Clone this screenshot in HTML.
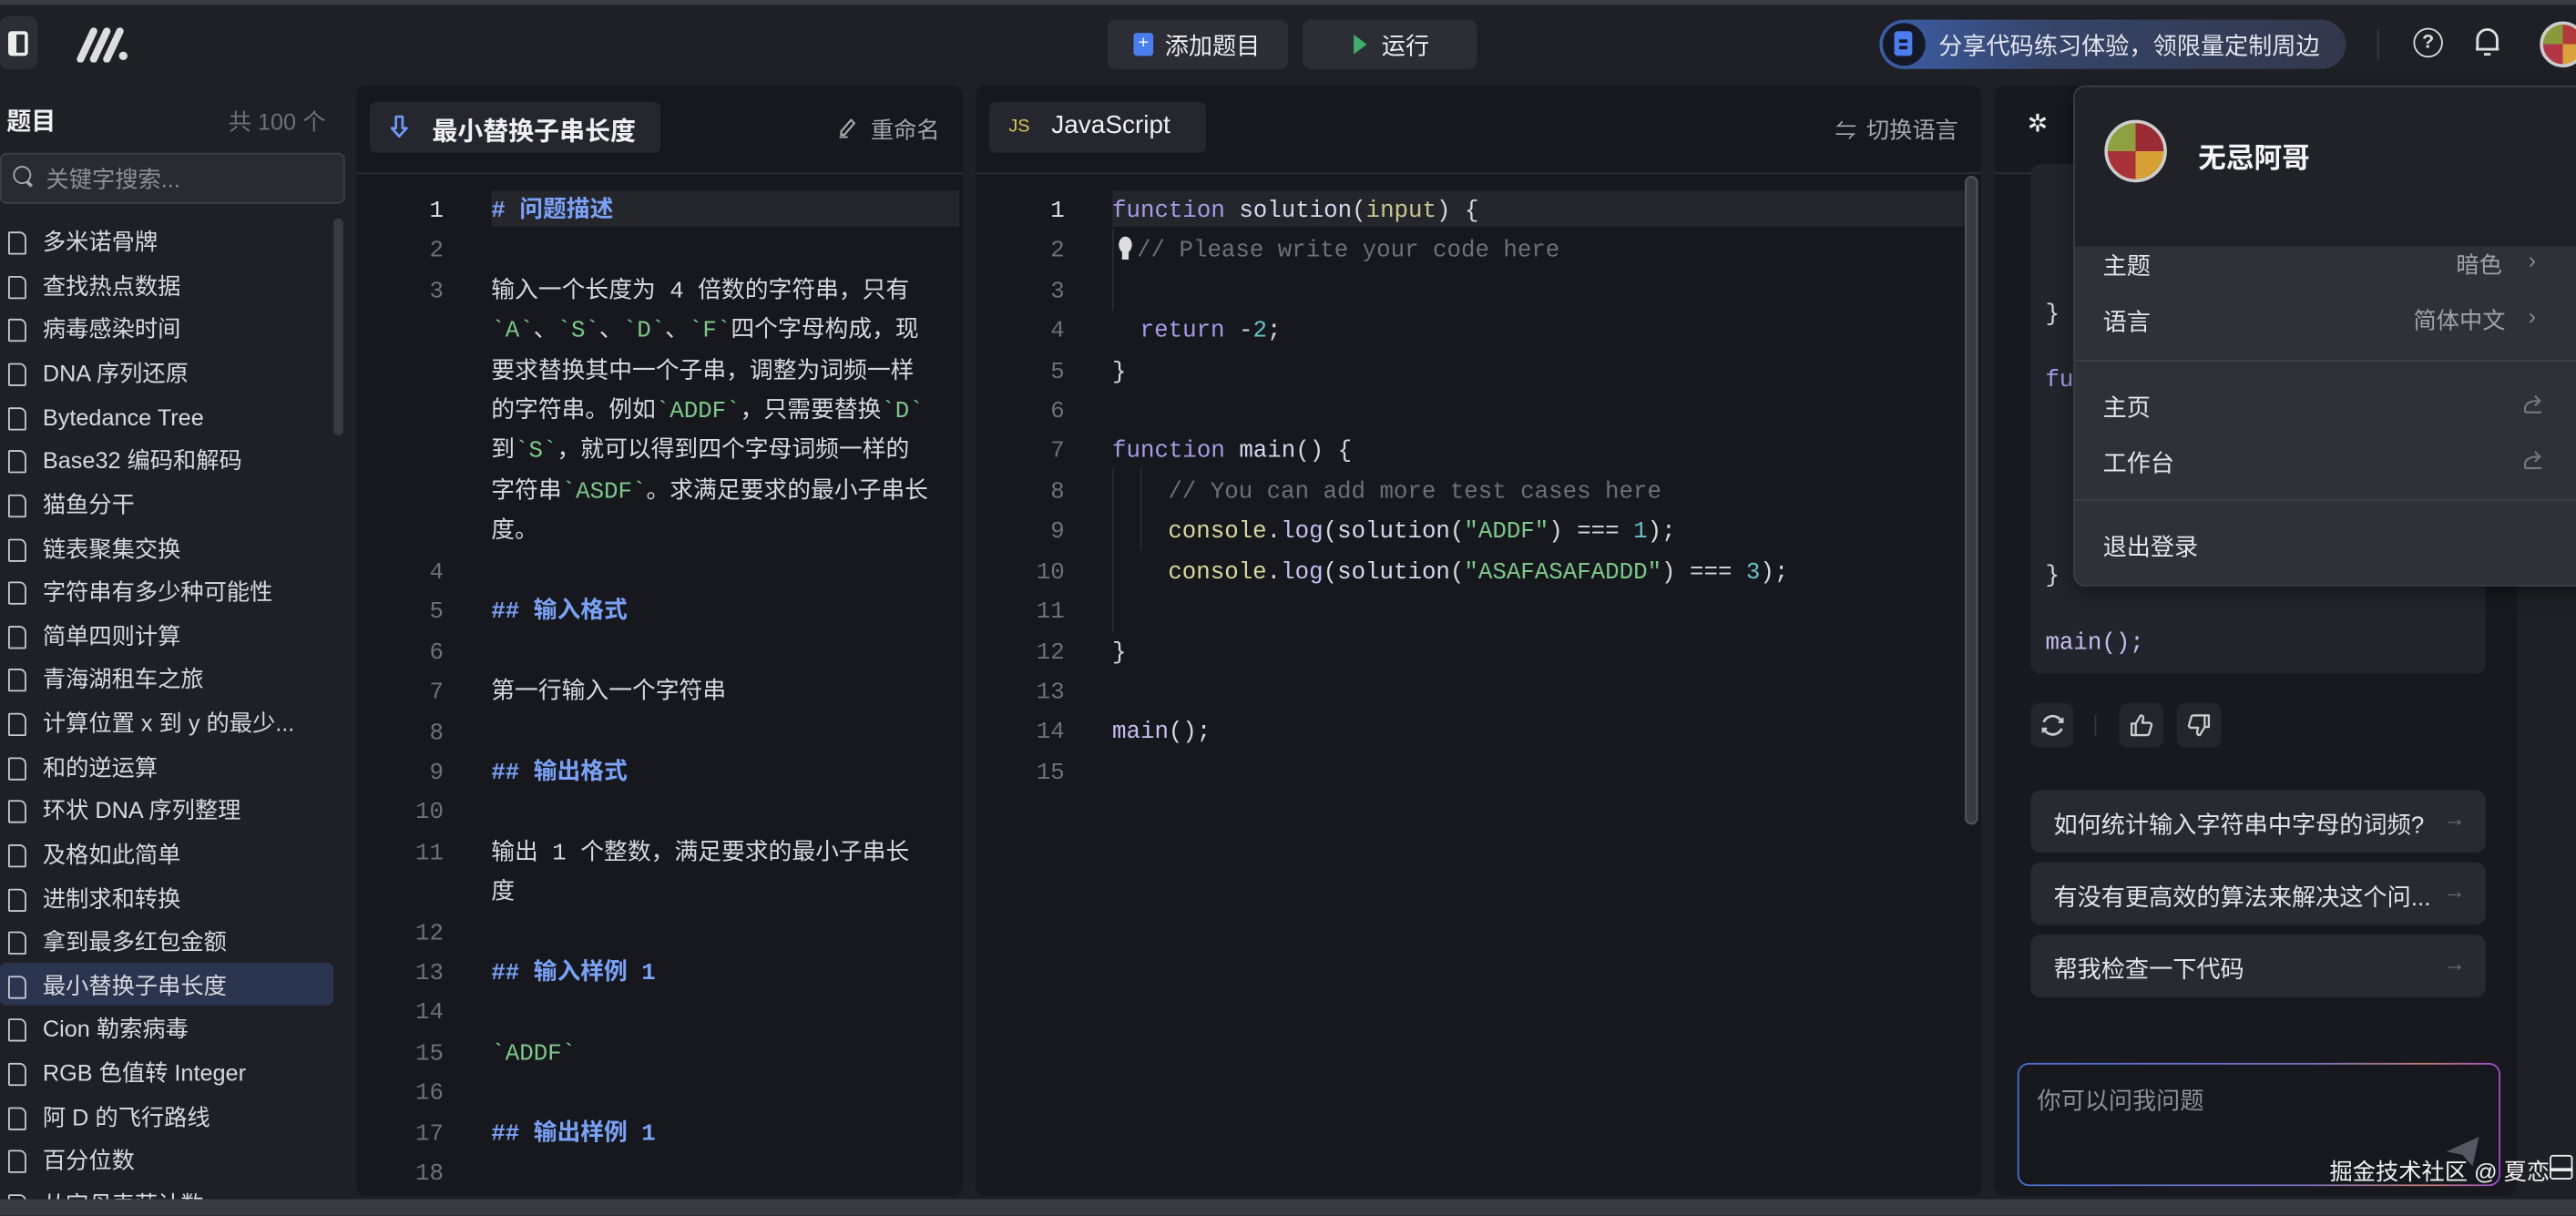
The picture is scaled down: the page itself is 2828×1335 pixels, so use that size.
<!DOCTYPE html>
<html><head><meta charset="utf-8"><style>
*{margin:0;padding:0;box-sizing:border-box}
html,body{width:2828px;height:1334px;overflow:hidden;background:#1f2025}
#w{position:absolute;left:0;top:0;width:1568px;height:740px;transform:scale(1.80357);transform-origin:0 0;background:#1f2025;font-family:"Liberation Sans","Noto Sans CJK SC",sans-serif;color:#d8d9de;font-size:14px;overflow:hidden}
.a{position:absolute;white-space:nowrap}
.m{font-family:"Liberation Mono","Noto Sans CJK SC",monospace;font-size:14.3px}
.ln{position:absolute;height:24px;line-height:24px;white-space:pre}
.num{text-align:right;width:30px;color:#6e707a;font-family:"Liberation Mono",monospace;font-size:14.3px}
.kw{color:#a99be8}.fn{color:#d9d7f0}.pa{color:#c9c88f}.cm{color:#6d707a}.nu{color:#63c5c9}.st{color:#7cc98a}.h{color:#7aa2f7;font-weight:bold}.cn{color:#d7da9a}.lg{color:#c7bdf0}
.item{position:absolute;left:0;width:203px;height:26px;line-height:26px;padding-left:26px;font-size:14px;color:#d8d9de}
.item:before{content:"";position:absolute;left:5px;top:7px;width:9px;height:12px;border:1.6px solid #c9cad0;border-radius:1px 4px 1px 1px}
.btn{position:absolute;background:#2c2d35;border-radius:5px}
</style></head><body><div id="w">
<div class="a" style="left:0;top:0;width:1568px;height:3px;background:#3b3c42"></div>
<!-- top bar -->
<div class="btn" style="left:0;top:10px;width:23px;height:32px;background:#2d2e35"></div>
<div class="a" style="left:5px;top:19px;width:12px;height:15px;border:2px solid #eee;border-left-width:5px;border-radius:2px"></div>
<svg class="a" style="left:46px;top:16px" width="34" height="22" viewBox="0 0 34 22"><path d="M3 20 L11 3 M11 20 L19 3 M19 20 L27 3" stroke="#ddd" stroke-width="4.5" stroke-linecap="round"/><circle cx="29" cy="18" r="2.6" fill="#ddd"/></svg>
<div class="btn" style="left:674px;top:12px;width:110px;height:30px"></div>
<div class="a" style="left:690px;top:20px;width:12px;height:14px;background:#4a7ef0;border-radius:2px;color:#fff;font-size:11px;line-height:13px;text-align:center">+</div>
<div class="a" style="left:709px;top:17px;font-size:14.5px;color:#eee">添加题目</div>
<div class="btn" style="left:793px;top:12px;width:106px;height:30px"></div>
<div class="a" style="left:824px;top:21px;width:0;height:0;border-left:8px solid #3fae6b;border-top:6px solid transparent;border-bottom:6px solid transparent"></div>
<div class="a" style="left:841px;top:17px;font-size:14.5px;color:#eee">运行</div>
<div class="a" style="left:1144px;top:12px;width:284px;height:30px;border-radius:15px;background:linear-gradient(90deg,#3b5ea8 0%,#36456a 35%,#33374a 100%)"></div>
<div class="a" style="left:1146px;top:14px;width:26px;height:26px;border-radius:13px;background:#151825"></div>
<div class="a" style="left:1153px;top:19px;width:11px;height:15px;border-radius:2px;background:#4a7ef0"></div>
<div class="a" style="left:1156px;top:24px;width:5px;height:1.5px;background:#151825"></div>
<div class="a" style="left:1156px;top:28px;width:5px;height:1.5px;background:#151825"></div>
<div class="a" style="left:1180px;top:17px;font-size:14.5px;color:#e4e6ee">分享代码练习体验，领限量定制周边</div>
<div class="a" style="left:1447px;top:18px;width:1px;height:18px;background:#3a3b42"></div>
<div class="a" style="left:1469px;top:17px;width:18px;height:18px;border:1.6px solid #ddd;border-radius:50%;font-size:12px;line-height:15px;text-align:center;color:#ddd;font-weight:bold">?</div>
<svg class="a" style="left:1505px;top:16px" width="18" height="20" viewBox="0 0 18 20"><path d="M3 14 V8 a6 6 0 0 1 12 0 V14 Z M2 14 H16 M7 17 H11" stroke="#ddd" stroke-width="1.6" fill="none" stroke-linejoin="round"/></svg>
<div class="a" style="left:1546px;top:13px;width:28px;height:28px;border-radius:50%;background:conic-gradient(#b23a3a 0 25%,#d9a23a 25% 50%,#b43545 50% 75%,#8a9a3a 75%);border:2px solid #ccc"></div>
<!-- sidebar -->
<div class="a" style="left:4px;top:63px;font-size:15px;font-weight:bold;color:#eee">题目</div>
<div class="a" style="left:139px;top:64px;font-size:14px;color:#6f7179">共 100 个</div>
<div class="a" style="left:0;top:93px;width:210px;height:31px;border:1px solid #3e3f47;border-radius:4px;background:#2a2b32"></div>
<div class="a" style="left:8px;top:101px;width:11px;height:11px;border:1.5px solid #aaa;border-radius:50%"></div>
<div class="a" style="left:16px;top:111px;width:4px;height:1.5px;background:#aaa;transform:rotate(45deg)"></div>
<div class="a" style="left:28px;top:99px;font-size:14px;color:#8d8f97">关键字搜索...</div>
<div class="a" style="left:203px;top:133px;width:6px;height:132px;background:#3a3b42;border-radius:3px"></div>
<div class="a" style="left:0;top:586px;width:203px;height:26px;background:#2c3550;border-radius:4px"></div>
<div class="item" style="top:134px">多米诺骨牌</div>
<div class="item" style="top:161px">查找热点数据</div>
<div class="item" style="top:187px">病毒感染时间</div>
<div class="item" style="top:214px">DNA 序列还原</div>
<div class="item" style="top:241px">Bytedance Tree</div>
<div class="item" style="top:267px">Base32 编码和解码</div>
<div class="item" style="top:294px">猫鱼分干</div>
<div class="item" style="top:321px">链表聚集交换</div>
<div class="item" style="top:347px">字符串有多少种可能性</div>
<div class="item" style="top:374px">简单四则计算</div>
<div class="item" style="top:400px">青海湖租车之旅</div>
<div class="item" style="top:427px">计算位置 x 到 y 的最少...</div>
<div class="item" style="top:454px">和的逆运算</div>
<div class="item" style="top:480px">环状 DNA 序列整理</div>
<div class="item" style="top:507px">及格如此简单</div>
<div class="item" style="top:534px">进制求和转换</div>
<div class="item" style="top:560px">拿到最多红包金额</div>
<div class="item" style="top:587px">最小替换子串长度</div>
<div class="item" style="top:613px">Cion 勒索病毒</div>
<div class="item" style="top:640px">RGB 色值转 Integer</div>
<div class="item" style="top:667px">阿 D 的飞行路线</div>
<div class="item" style="top:693px">百分位数</div>
<div class="item" style="top:720px;height:10px;overflow:hidden">从字母表获计数</div>
<!-- panel 1 -->
<div class="a" style="left:217px;top:52px;width:369px;height:676px;background:#17181d;border-radius:6px;overflow:hidden">
 <div class="a" style="left:0;top:53px;width:369px;height:1px;background:#2e2f36"></div>
 <div class="a" style="left:8px;top:10px;width:177px;height:31px;background:#26272e;border-radius:4px"></div>
 <svg class="a" style="left:20px;top:17px" width="12" height="16" viewBox="0 0 12 16"><path d="M4 2 V9 H1.5 L6 14 L10.5 9 H8 V2 Z" stroke="#6b9bf5" stroke-width="1.5" fill="none" stroke-linejoin="round"/></svg>
 <div class="a" style="left:46px;top:16px;font-size:15.5px;font-weight:bold;color:#f0f0f3">最小替换子串长度</div>
 <svg class="a" style="left:293px;top:19px" width="12" height="13" viewBox="0 0 12 13"><path d="M2 9 L8 2 L10 4 L4 11 L2 11 Z M1 12.5 H6" stroke="#aaa" stroke-width="1.2" fill="none"/></svg>
 <div class="a" style="left:313px;top:17px;font-size:14px;color:#a3a5ad">重命名</div>
 <div class="a" style="left:82px;top:64px;width:285px;height:22px;background:#25262c"></div>
</div>
<div class="m" style="position:absolute;left:0;top:2px">
<div class="ln num" style="left:240px;top:115px;color:#e0e0e4">1</div>
<div class="ln num" style="left:240px;top:139px">2</div>
<div class="ln num" style="left:240px;top:164px">3</div>
<div class="ln num" style="left:240px;top:335px">4</div>
<div class="ln num" style="left:240px;top:359px">5</div>
<div class="ln num" style="left:240px;top:384px">6</div>
<div class="ln num" style="left:240px;top:408px">7</div>
<div class="ln num" style="left:240px;top:433px">8</div>
<div class="ln num" style="left:240px;top:457px">9</div>
<div class="ln num" style="left:240px;top:481px">10</div>
<div class="ln num" style="left:240px;top:506px">11</div>
<div class="ln num" style="left:240px;top:555px">12</div>
<div class="ln num" style="left:240px;top:579px">13</div>
<div class="ln num" style="left:240px;top:603px">14</div>
<div class="ln num" style="left:240px;top:628px">15</div>
<div class="ln num" style="left:240px;top:652px">16</div>
<div class="ln num" style="left:240px;top:677px">17</div>
<div class="ln num" style="left:240px;top:701px">18</div>
<div class="ln h" style="left:299px;top:115px"># 问题描述</div>
<div class="ln" style="left:299px;top:164px">输入一个长度为 4 倍数的字符串，只有</div>
<div class="ln" style="left:299px;top:188px"><span class="st">`A`</span>、<span class="st">`S`</span>、<span class="st">`D`</span>、<span class="st">`F`</span>四个字母构成，现</div>
<div class="ln" style="left:299px;top:213px">要求替换其中一个子串，调整为词频一样</div>
<div class="ln" style="left:299px;top:237px">的字符串。例如<span class="st">`ADDF`</span>，只需要替换<span class="st">`D`</span></div>
<div class="ln" style="left:299px;top:261px">到<span class="st">`S`</span>，就可以得到四个字母词频一样的</div>
<div class="ln" style="left:299px;top:286px">字符串<span class="st">`ASDF`</span>。求满足要求的最小子串长</div>
<div class="ln" style="left:299px;top:310px">度。</div>
<div class="ln h" style="left:299px;top:359px">## 输入格式</div>
<div class="ln" style="left:299px;top:408px">第一行输入一个字符串</div>
<div class="ln h" style="left:299px;top:457px">## 输出格式</div>
<div class="ln" style="left:299px;top:506px">输出 1 个整数，满足要求的最小子串长</div>
<div class="ln" style="left:299px;top:530px">度</div>
<div class="ln h" style="left:299px;top:579px">## 输入样例 1</div>
<div class="ln" style="left:299px;top:628px"><span class="st">`ADDF`</span></div>
<div class="ln h" style="left:299px;top:677px">## 输出样例 1</div>
</div>
<!-- panel 2 -->
<div class="a" style="left:594px;top:52px;width:612px;height:676px;background:#17181d;border-radius:6px;overflow:hidden">
 <div class="a" style="left:0;top:53px;width:612px;height:1px;background:#2e2f36"></div>
 <div class="a" style="left:8px;top:10px;width:132px;height:31px;background:#26272e;border-radius:4px"></div>
 <div class="a" style="left:20px;top:19px;font-size:11px;color:#d9c750">JS</div>
 <div class="a" style="left:46px;top:16px;font-size:15.5px;color:#f0f0f3">JavaScript</div>
 <div class="a" style="left:523px;top:17px;font-size:13px;color:#aaa">⇋</div>
 <div class="a" style="left:542px;top:17px;font-size:14px;color:#a3a5ad">切换语言</div>
 <div class="a" style="left:83px;top:64px;width:520px;height:22px;background:#25262c"></div>
 <div class="a" style="left:602px;top:55px;width:8px;height:395px;background:#3a3b42;border-radius:4px;border:1px solid #55565e"></div>
 <div class="a" style="left:83px;top:87px;width:1px;height:50px;background:#2a2b31"></div>
 <div class="a" style="left:83px;top:233px;width:1px;height:100px;background:#2a2b31"></div>
 <div class="a" style="left:100px;top:233px;width:1px;height:50px;background:#2a2b31"></div>
</div>
<div class="m" style="position:absolute;left:0;top:2px">
<div class="ln num" style="left:618px;top:115px;color:#e0e0e4">1</div>
<div class="ln num" style="left:618px;top:139px">2</div>
<div class="ln num" style="left:618px;top:164px">3</div>
<div class="ln num" style="left:618px;top:188px">4</div>
<div class="ln num" style="left:618px;top:213px">5</div>
<div class="ln num" style="left:618px;top:237px">6</div>
<div class="ln num" style="left:618px;top:261px">7</div>
<div class="ln num" style="left:618px;top:286px">8</div>
<div class="ln num" style="left:618px;top:310px">9</div>
<div class="ln num" style="left:618px;top:335px">10</div>
<div class="ln num" style="left:618px;top:359px">11</div>
<div class="ln num" style="left:618px;top:384px">12</div>
<div class="ln num" style="left:618px;top:408px">13</div>
<div class="ln num" style="left:618px;top:432px">14</div>
<div class="ln num" style="left:618px;top:457px">15</div>
<div class="ln" style="left:677px;top:115px"><span class="kw">function</span> <span class="fn">solution</span>(<span class="pa">input</span>) {</div>
<div class="a" style="left:681px;top:142px;width:8px;height:10px;border-radius:50%;background:#ddd"></div>
<div class="a" style="left:683px;top:151px;width:4px;height:5px;background:#ddd"></div>
<div class="ln cm" style="left:692px;top:139px">// Please write your code here</div>
<div class="ln" style="left:694px;top:188px"><span class="kw">return</span> -<span class="nu">2</span>;</div>
<div class="ln" style="left:677px;top:213px">}</div>
<div class="ln" style="left:677px;top:261px"><span class="kw">function</span> <span class="fn">main</span>() {</div>
<div class="ln cm" style="left:711px;top:286px">// You can add more test cases here</div>
<div class="ln" style="left:711px;top:310px"><span class="cn">console</span>.<span class="lg">log</span>(<span class="fn">solution</span>(<span class="st">"ADDF"</span>) === <span class="nu">1</span>);</div>
<div class="ln" style="left:711px;top:335px"><span class="cn">console</span>.<span class="lg">log</span>(<span class="fn">solution</span>(<span class="st">"ASAFASAFADDD"</span>) === <span class="nu">3</span>);</div>
<div class="ln" style="left:677px;top:384px">}</div>
<div class="ln" style="left:677px;top:432px"><span class="lg">main</span>();</div>
</div>
<!-- panel 3 -->
<div class="a" style="left:1214px;top:52px;width:318px;height:676px;background:#18191e;border-radius:6px;overflow:hidden">
 <div class="a" style="left:0;top:53px;width:318px;height:1px;background:#2e2f36"></div>
 <div class="a" style="left:20px;top:14px;font-size:15px;color:#eee">✲</div>
 <div class="a" style="left:22px;top:48px;width:277px;height:310px;background:#24252c;border-radius:6px"></div>
</div>
<div class="m" style="position:absolute;left:0;top:2px">
<div class="ln" style="left:1245px;top:178px">}</div>
<div class="ln kw" style="left:1245px;top:218px">fu</div>
<div class="ln" style="left:1245px;top:337px">}</div>
<div class="ln lg" style="left:1245px;top:378px">main();</div>
</div>
<div class="btn" style="left:1236px;top:428px;width:26px;height:27px;background:#25262d"></div>
<svg class="a" style="left:1241px;top:433px" width="17" height="17" viewBox="0 0 17 17"><path d="M3 6.5 A6 6 0 0 1 14 6.5 M14 10.5 A6 6 0 0 1 3 10.5" stroke="#ccc" stroke-width="1.5" fill="none"/><path d="M12 6.5 H14.5 V4 M5 10.5 H2.5 V13" stroke="#ccc" stroke-width="1.3" fill="none"/></svg>
<div class="a" style="left:1275px;top:435px;width:1px;height:13px;background:#333"></div>
<div class="btn" style="left:1290px;top:428px;width:27px;height:27px;background:#25262d"></div>
<svg class="a" style="left:1296px;top:434px" width="15" height="15" viewBox="0 0 15 15"><path d="M1.5 6.5 H4 V13.5 H1.5 Z M4 6.5 L7 1.5 Q9 1.5 8.5 4 L8 6 H12.5 Q14 6.5 13.5 8 L12 13 Q11.5 13.5 10.5 13.5 H4" stroke="#ccc" stroke-width="1.3" fill="none" stroke-linejoin="round"/></svg>
<div class="btn" style="left:1325px;top:428px;width:27px;height:27px;background:#25262d"></div>
<svg class="a" style="left:1331px;top:434px" width="15" height="15" viewBox="0 0 15 15"><g transform="rotate(180 7.5 7.5)"><path d="M1.5 6.5 H4 V13.5 H1.5 Z M4 6.5 L7 1.5 Q9 1.5 8.5 4 L8 6 H12.5 Q14 6.5 13.5 8 L12 13 Q11.5 13.5 10.5 13.5 H4" stroke="#ccc" stroke-width="1.3" fill="none" stroke-linejoin="round"/></g></svg>
<div class="btn" style="left:1236px;top:481px;width:277px;height:38px;background:#292a31;border-radius:6px"></div>
<div class="a" style="left:1250px;top:491px;font-size:14.5px;color:#e3e4e8">如何统计输入字符串中字母的词频?</div>
<div class="a" style="left:1487px;top:490px;color:#6b6d75">→</div>
<div class="btn" style="left:1236px;top:525px;width:277px;height:38px;background:#292a31;border-radius:6px"></div>
<div class="a" style="left:1250px;top:535px;font-size:14.5px;color:#e3e4e8">有没有更高效的算法来解决这个问...</div>
<div class="a" style="left:1487px;top:534px;color:#6b6d75">→</div>
<div class="btn" style="left:1236px;top:569px;width:277px;height:38px;background:#292a31;border-radius:6px"></div>
<div class="a" style="left:1250px;top:579px;font-size:14.5px;color:#e3e4e8">帮我检查一下代码</div>
<div class="a" style="left:1487px;top:578px;color:#6b6d75">→</div>
<div class="a" style="left:1228px;top:647px;width:294px;height:75px;border-radius:7px;background:linear-gradient(90deg,#4a6fd0,#7a6fc0 60%,#c07a70 85%,#a050d0);padding:1px">
 <div style="width:100%;height:100%;background:#17181d;border-radius:6px"></div></div>
<div class="a" style="left:1240px;top:659px;font-size:14.5px;color:#8e9098">你可以问我问题</div>
<svg class="a" style="left:1488px;top:691px" width="22" height="20" viewBox="0 0 22 20"><path d="M1 10 L21 1 L17 19 L11 12 Z" fill="#555862"/></svg>
<div class="a" style="left:1418px;top:703px;font-size:14px;color:#f2f2f2">掘金技术社区 @ 夏恋</div>
<div class="a" style="left:1552px;top:703px;width:14px;height:15px;border:1.6px solid #eee;border-radius:2px"></div>
<div class="a" style="left:1552px;top:711px;width:14px;height:1.6px;background:#eee"></div>
<!-- dropdown -->
<div class="a" style="left:1262px;top:52px;width:320px;height:305px;background:#2f3038;border:1px solid #3c3d45;border-radius:7px;overflow:hidden;box-shadow:0 4px 12px rgba(0,0,0,.4)">
 <div class="a" style="left:0;top:0;width:320px;height:97px;background:#212228"></div>
 <div class="a" style="left:18px;top:20px;width:38px;height:38px;border-radius:50%;background:conic-gradient(#9a2a33 0 25%,#d7a035 25% 50%,#a83038 50% 75%,#8ea040 75%);border:2px solid #ccc"></div>
 <div class="a" style="left:75px;top:29px;font-size:17px;font-weight:bold;color:#f5f5f7">无忌阿哥</div>
 <div class="a" style="left:17px;top:98px;font-size:14.5px;color:#e6e6ea">主题</div>
 <div class="a" style="left:232px;top:98px;font-size:14px;color:#a0a2aa">暗色</div>
 <div class="a" style="left:276px;top:97px;font-size:14px;color:#8a8c94">›</div>
 <div class="a" style="left:17px;top:132px;font-size:14.5px;color:#e6e6ea">语言</div>
 <div class="a" style="left:206px;top:132px;font-size:14px;color:#a0a2aa">简体中文</div>
 <div class="a" style="left:276px;top:131px;font-size:14px;color:#8a8c94">›</div>
 <div class="a" style="left:0;top:166px;width:320px;height:1px;background:#3e3f47"></div>
 <div class="a" style="left:17px;top:184px;font-size:14.5px;color:#e6e6ea">主页</div>
 <div class="a" style="left:17px;top:218px;font-size:14.5px;color:#e6e6ea">工作台</div>
 <svg class="a" style="left:272px;top:186px" width="14" height="14" viewBox="0 0 14 14"><path d="M2 12 H12 M2 12 V9 Q3 5 10 5 M8 2 L11 5 L8 8" stroke="#777" stroke-width="1.2" fill="none"/></svg>
 <svg class="a" style="left:272px;top:220px" width="14" height="14" viewBox="0 0 14 14"><path d="M2 12 H12 M2 12 V9 Q3 5 10 5 M8 2 L11 5 L8 8" stroke="#777" stroke-width="1.2" fill="none"/></svg>
 <div class="a" style="left:0;top:251px;width:320px;height:1px;background:#3e3f47"></div>
 <div class="a" style="left:17px;top:269px;font-size:14.5px;color:#e6e6ea">退出登录</div>
</div>
<div class="a" style="left:0;top:730px;width:1568px;height:10px;background:#3a3b42"></div>
</div></body></html>
